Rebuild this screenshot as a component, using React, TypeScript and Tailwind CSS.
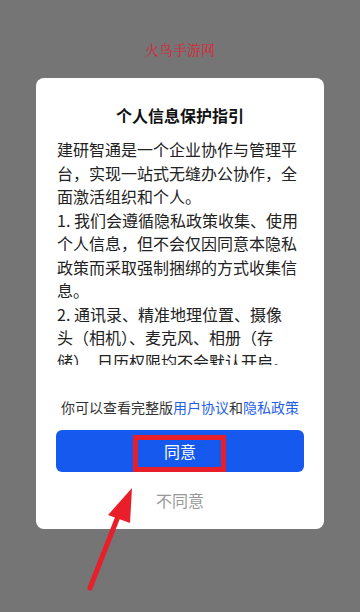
import React from "react";

const lines = [
  "建研智通是一个企业协作与管理平",
  "台，实现一站式无缝办公协作，全",
  "面激活组织和个人。",
  "1. 我们会遵循隐私政策收集、使用",
  "个人信息，但不会仅因同意本隐私",
  "政策而采取强制捆绑的方式收集信",
  "息。",
  "2. 通讯录、精准地理位置、摄像",
  "头（相机）、麦克风、相册（存",
  "储）、日历权限均不会默认开启。",
];

export default function App() {
  return (
    <div
      className="relative w-[360px] h-[612px] bg-[#757575] overflow-hidden flex flex-col items-center"
      style={{ fontFamily: '"Noto Sans CJK SC", "Noto Sans", sans-serif' }}
    >
      <div
        className="mt-[39px] h-[20px] leading-[20px] text-[14px] text-[#d6283a]"
        style={{ fontFamily: '"Noto Serif CJK SC", "AR PL UMing CN", serif' }}
      >
        火鸟手游网
      </div>
      <div className="mt-[19px] w-[288px] bg-white rounded-[8px] flex flex-col items-center pt-[25px] pb-[17px]">
        <div className="h-[24px] leading-[24px] text-[16px] font-semibold text-[#111]">
          个人信息保护指引
        </div>
        <div className="mt-[11px] w-[246px] h-[227px] overflow-hidden text-[16px] leading-[23.5px] text-[#222]">
          {lines.map((l, i) => (
            <div key={i} className="whitespace-nowrap">
              {l}
            </div>
          ))}
        </div>
        <div className="mt-[32px] h-[20px] leading-[20px] text-[14px] text-[#333] whitespace-nowrap">
          你可以查看完整版<span className="text-[#1f5fe8]">用户协议</span>和
          <span className="text-[#1f5fe8]">隐私政策</span>
        </div>
        <div className="relative mt-[13px] w-[248px] h-[42px] rounded-[6px] bg-[#1659ee] flex items-center justify-center">
          <span className="text-[16px] leading-[24px] text-white">同意</span>
          <div className="absolute left-[77px] top-[5px] w-[93px] h-[37px] border-[5px] border-[#e81e2a]" />
        </div>
        <div className="mt-[16px] h-[24px] leading-[24px] text-[16px] text-[#999]">不同意</div>
      </div>
      <svg className="absolute left-0 top-0" width="360" height="612" viewBox="0 0 360 612">
        <line x1="90" y1="588" x2="119" y2="514" stroke="#e81e2a" strokeWidth="5" strokeLinecap="round" />
        <polygon points="132,488 108,515 130,523" fill="#e81e2a" />
      </svg>
    </div>
  );
}
